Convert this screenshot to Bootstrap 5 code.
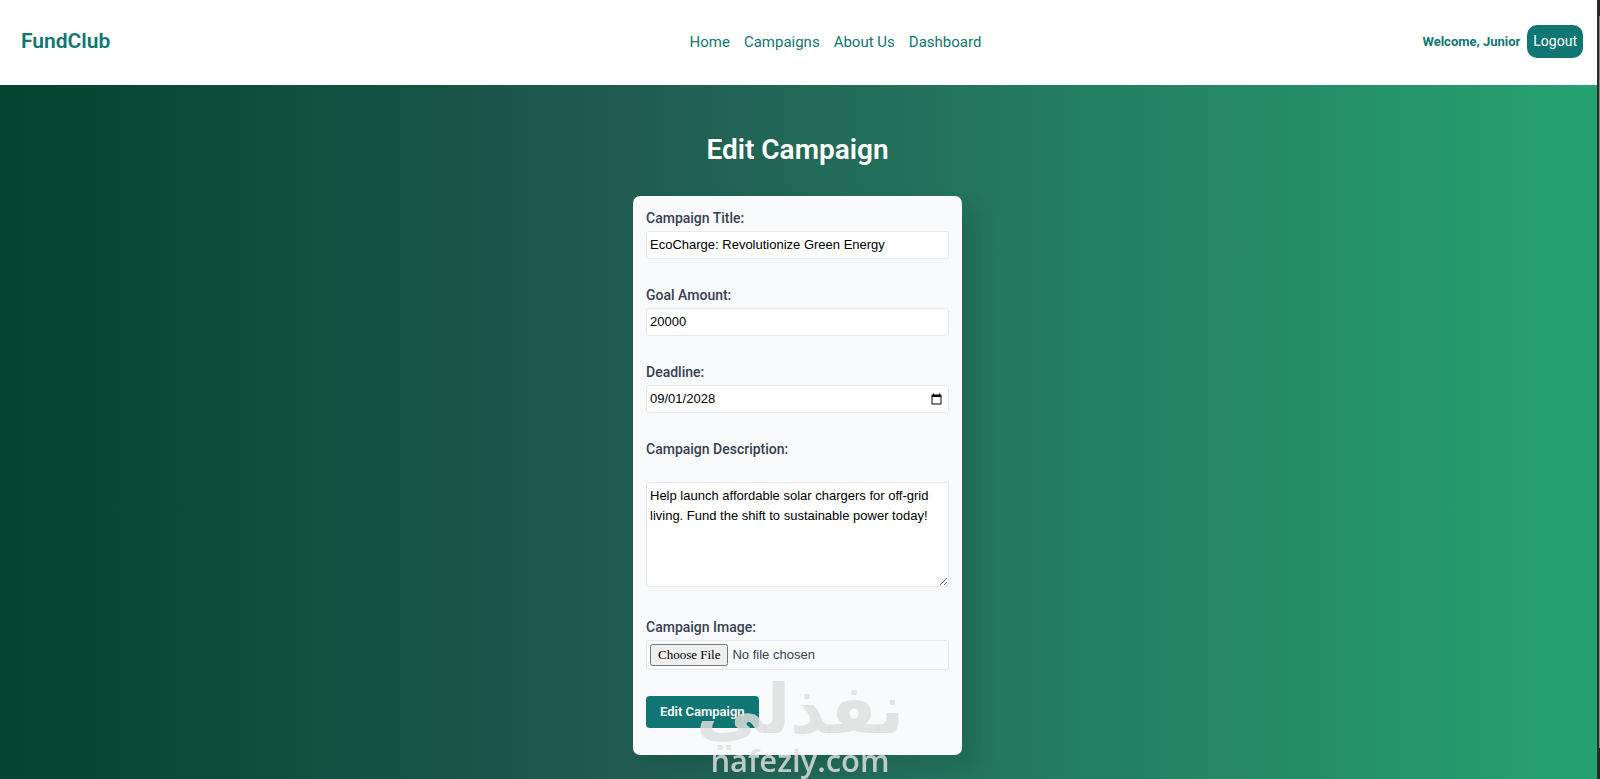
<!DOCTYPE html>
<html lang="en">
<head>
<meta charset="utf-8">
<meta name="viewport" content="width=device-width, initial-scale=1">
<title>FundClub - Edit Campaign</title>
<link href="https://cdn.jsdelivr.net/npm/bootstrap@5.3.0/dist/css/bootstrap.min.css" rel="stylesheet">
<style>
  :root { --teal: #0f7673; }
  body {
    font-family: Roboto, "Liberation Sans", sans-serif;
    font-size: 14px;
    line-height: 20px;
    color: #374151;
    padding-right: 3px;
    background: #fff;
  }
  .site-header { padding: 25px 14px 27px 21px; }
  .header-start { flex: 10 1 0; }
  .header-end { flex: 9 1 0; gap: 7px; }
  .site-brand { font-size: 21px; font-weight: 600; }
  .site-header a, .welcome { color: var(--teal); text-decoration: none; }
  .site-links { gap: 14px; font-size: 15px; }
  .welcome { font-weight: 700; font-size: 13px; }
  .btn-logout { background: var(--teal); color: #fff; border-radius: 10px; padding: 6px; font-size: 14px; line-height: 21px; }
  .campaign-page { background: linear-gradient(90deg, #03432f 0%, #205c50 40%, #23785f 63%, #26a271 100%); padding: 45px 2px 24px 0; }
  .page-title { font-size: 28px; line-height: 40px; font-weight: 600; color: #fff; margin-bottom: 26px; }
  .campaign-form { width: 329px; background: #f8fafc; border-radius: 7px; padding: 12px 13px 27px; box-shadow: 16px 12px 20px rgba(0,0,0,.09); }
  .campaign-form label { font-weight: 500; margin-bottom: 3px; }
  .field { display: block; width: 100%; border: 1px solid #e5e7eb; border-radius: 3px; background: #fff; color: #000; padding: 3px; font: 13px/20px "Liberation Sans", sans-serif; }
  .field-group { margin-bottom: 26px; }
  .campaign-form .label-spaced { margin-bottom: 23px; }
  .group-tall { margin-bottom: 30px; }
  textarea.field { height: 105px; }
  input[type=file].field { background: transparent; color: #374151; }
  input[type=file]::file-selector-button { font: 13px "Liberation Serif", serif; padding: 1px 6px; }
  .btn-save { background: var(--teal); color: #fff; font-weight: 600; border-radius: 4px; padding: 6px 14px; font-size: 13px; line-height: 20px; }
  .watermark { position: fixed; bottom: 0; left: 0; right: 0; color: rgba(222,222,222,.84); pointer-events: none; }
  .watermark-ar { font: 700 68px/62px "DejaVu Sans", sans-serif; }
  .watermark-en { font: 600 31px/38px "Open Sans", sans-serif; }
  .scroll-edge { position: fixed; top: 0; right: 0; bottom: 0; width: 3px; border-left: 2px solid #26302d; background: linear-gradient(#222 2%, #8a8a8a 2%, #8a8a8a 96%, #222 96%); }
</style>
</head>
<body class="min-vh-100 d-flex flex-column">
  <header class="site-header d-flex align-items-center">
    <div class="header-start"><a class="site-brand" href="#">FundClub</a></div>
    <nav class="site-links d-flex">
      <a href="#">Home</a><a href="#">Campaigns</a><a href="#">About Us</a><a href="#">Dashboard</a>
    </nav>
    <div class="header-end d-flex justify-content-end align-items-center">
      <span class="welcome">Welcome, Junior</span>
      <button type="button" class="btn-logout border-0">Logout</button>
    </div>
  </header>
  <main class="campaign-page flex-grow-1 d-flex flex-column align-items-center">
    <h1 class="page-title">Edit Campaign</h1>
    <form class="campaign-form">
      <div class="field-group"><label for="title">Campaign Title:</label>
        <input class="field" id="title" type="text" value="EcoCharge: Revolutionize Green Energy"></div>
      <div class="field-group"><label for="goal">Goal Amount:</label>
        <input class="field" id="goal" type="text" inputmode="numeric" value="20000"></div>
      <div class="field-group"><label for="deadline">Deadline:</label>
        <input class="field" id="deadline" type="date" value="2028-09-01"></div>
      <div class="group-tall"><label for="description" class="label-spaced">Campaign Description:</label>
        <textarea class="field" id="description">Help launch affordable solar chargers for off-grid living. Fund the shift to sustainable power today!</textarea></div>
      <div class="field-group"><label for="image">Campaign Image:</label>
        <input class="field" id="image" type="file"></div>
      <button type="button" class="btn-save border-0">Edit Campaign</button>
    </form>
  </main>
  <div class="watermark text-center">
    <div class="watermark-ar" lang="ar" dir="rtl">نفذلي</div>
    <div class="watermark-en">nafezly.com</div>
  </div>
  <div class="scroll-edge"></div>
<script src="https://cdn.jsdelivr.net/npm/bootstrap@5.3.0/dist/js/bootstrap.bundle.min.js"></script>
</body>
</html>
